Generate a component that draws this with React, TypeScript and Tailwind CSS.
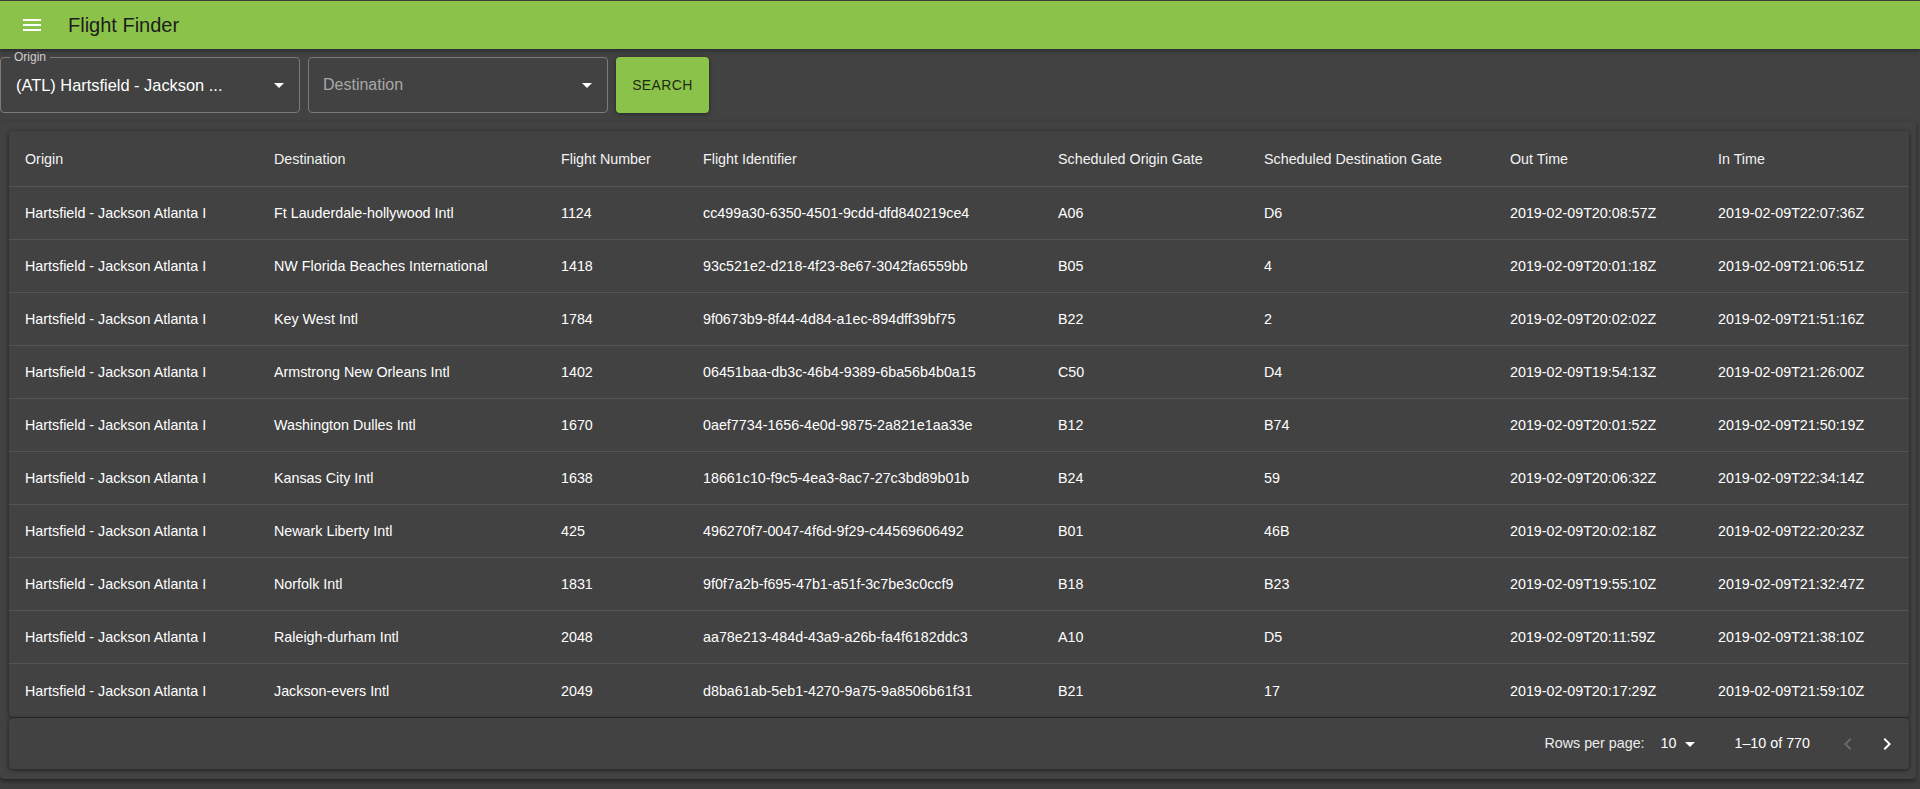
import React from "react";

const rows = [
  ["Ft Lauderdale-hollywood Intl", "1124", "cc499a30-6350-4501-9cdd-dfd840219ce4", "A06", "D6", "2019-02-09T20:08:57Z", "2019-02-09T22:07:36Z"],
  ["NW Florida Beaches International", "1418", "93c521e2-d218-4f23-8e67-3042fa6559bb", "B05", "4", "2019-02-09T20:01:18Z", "2019-02-09T21:06:51Z"],
  ["Key West Intl", "1784", "9f0673b9-8f44-4d84-a1ec-894dff39bf75", "B22", "2", "2019-02-09T20:02:02Z", "2019-02-09T21:51:16Z"],
  ["Armstrong New Orleans Intl", "1402", "06451baa-db3c-46b4-9389-6ba56b4b0a15", "C50", "D4", "2019-02-09T19:54:13Z", "2019-02-09T21:26:00Z"],
  ["Washington Dulles Intl", "1670", "0aef7734-1656-4e0d-9875-2a821e1aa33e", "B12", "B74", "2019-02-09T20:01:52Z", "2019-02-09T21:50:19Z"],
  ["Kansas City Intl", "1638", "18661c10-f9c5-4ea3-8ac7-27c3bd89b01b", "B24", "59", "2019-02-09T20:06:32Z", "2019-02-09T22:34:14Z"],
  ["Newark Liberty Intl", "425", "496270f7-0047-4f6d-9f29-c44569606492", "B01", "46B", "2019-02-09T20:02:18Z", "2019-02-09T22:20:23Z"],
  ["Norfolk Intl", "1831", "9f0f7a2b-f695-47b1-a51f-3c7be3c0ccf9", "B18", "B23", "2019-02-09T19:55:10Z", "2019-02-09T21:32:47Z"],
  ["Raleigh-durham Intl", "2048", "aa78e213-484d-43a9-a26b-fa4f6182ddc3", "A10", "D5", "2019-02-09T20:11:59Z", "2019-02-09T21:38:10Z"],
  ["Jackson-evers Intl", "2049", "d8ba61ab-5eb1-4270-9a75-9a8506b61f31", "B21", "17", "2019-02-09T20:17:29Z", "2019-02-09T21:59:10Z"],
];

const headers = [
  "Origin",
  "Destination",
  "Flight Number",
  "Flight Identifier",
  "Scheduled Origin Gate",
  "Scheduled Destination Gate",
  "Out Time",
  "In Time",
];

const gridCols =
  "grid grid-cols-[249px_287px_142px_355px_206px_246px_208px_207px]";

function DropArrow() {
  return (
    <svg width="24" height="24" viewBox="0 0 24 24" fill="#ffffff">
      <path d="M7 10l5 5 5-5z" />
    </svg>
  );
}

export default function App() {
  return (
    <div
      className="w-[1920px] h-[789px] bg-[#3e3e3e] pt-px overflow-hidden text-white"
      style={{ fontFamily: '"Liberation Sans", Arial, sans-serif' }}
    >
      <header className="h-[48px] bg-[#8bc34a] flex items-center pl-[20px] shadow-[0_2px_4px_rgba(0,0,0,0.35)] relative z-10">
        <svg width="24" height="24" viewBox="0 0 24 24" fill="#ffffff">
          <path d="M3 18h18v-2H3v2zm0-5h18v-2H3v2zm0-7v2h18V6H3z" />
        </svg>
        <span className="ml-[24px] text-[20px] text-[#1c1c1c]">Flight Finder</span>
      </header>

      <div className="bg-[#424242]">
        <div className="flex items-start gap-[8px] pt-[8px] pb-[8px]">
          <div className="relative w-[300px] h-[56px] rounded-[4px] border border-[#7b7b7b] flex items-center pl-[15px] pr-[8px]">
            <span className="absolute left-[9px] top-[-8px] px-[4px] bg-[#424242] text-[12px] leading-[14px] text-[#d0d0d0]">
              Origin
            </span>
            <span className="flex-1 text-[16.4px]">(ATL) Hartsfield - Jackson ...</span>
            <DropArrow />
          </div>
          <div className="w-[300px] h-[56px] rounded-[4px] border border-[#7b7b7b] flex items-center pl-[14px] pr-[8px]">
            <span className="flex-1 text-[16px] text-[#a8a8a8]">Destination</span>
            <DropArrow />
          </div>
          <button className="w-[93px] h-[56px] rounded-[4px] bg-[#8bc34a] text-[14px] tracking-[0.4px] text-[#1f2a14] shadow-[0_1px_4px_rgba(0,0,0,0.45)]">
            SEARCH
          </button>
        </div>

        <div className="w-[1916px] h-[658px] bg-[#424242] rounded-[4px] shadow-[0_2px_4px_rgba(0,0,0,0.45)] pt-[10px] pl-[9px] pr-[7px]">
          <div className="rounded-[4px] bg-[#424242] shadow-[0_1px_4px_rgba(0,0,0,0.55)] text-[14.3px]">
            <div className={`${gridCols} h-[56px] items-center border-b border-[#545454]`}>
              {headers.map((h) => (
                <div key={h} className="pl-[16px] pt-[2px] text-[#f2f2f2] whitespace-nowrap">
                  {h}
                </div>
              ))}
            </div>
            {rows.map((r, i) => (
              <div
                key={i}
                className={`${gridCols} h-[53px] items-center ${i < rows.length - 1 ? "border-b border-[#545454]" : ""}`}
              >
                <div className="pl-[16px] pt-[2px] whitespace-nowrap">Hartsfield - Jackson Atlanta I</div>
                {r.map((c, j) => (
                  <div key={j} className="pl-[16px] pt-[2px] whitespace-nowrap">
                    {c}
                  </div>
                ))}
              </div>
            ))}
          </div>

          <div className="mt-px h-[51px] rounded-[4px] bg-[#424242] shadow-[0_1px_4px_rgba(0,0,0,0.55)] flex items-center justify-end text-[14.3px] pr-[10px]">
            <span className="text-[#ececec]">Rows per page:</span>
            <span className="ml-[16px]">10</span>
            <span className="ml-[2px]">
              <DropArrow />
            </span>
            <span className="ml-[32px]">1–10 of 770</span>
            <span className="ml-[26px]">
              <svg width="24" height="24" viewBox="0 0 24 24" fill="#6a6a6a">
                <path d="M15.41 7.41L14 6l-6 6 6 6 1.41-1.41L10.83 12z" />
              </svg>
            </span>
            <span className="ml-[15px]">
              <svg width="24" height="24" viewBox="0 0 24 24" fill="#ffffff">
                <path d="M10 6L8.59 7.41 13.17 12l-4.58 4.59L10 18l6-6z" />
              </svg>
            </span>
          </div>
        </div>
      </div>
    </div>
  );
}
